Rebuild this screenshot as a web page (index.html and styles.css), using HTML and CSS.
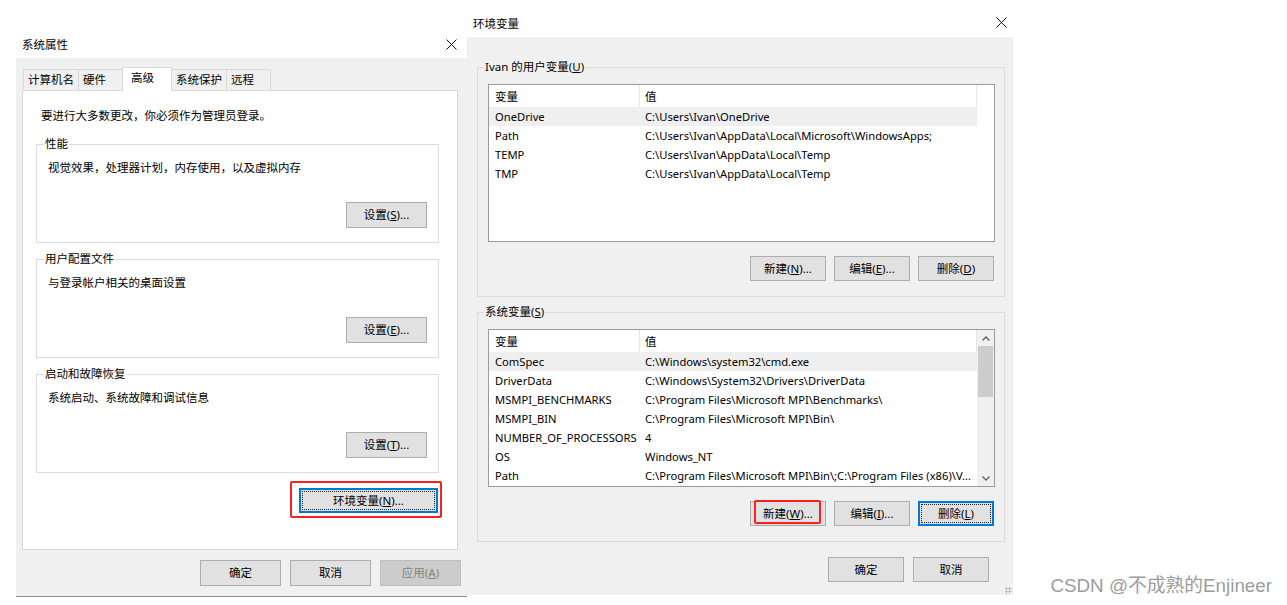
FILE: index.html
```html
<!DOCTYPE html>
<html lang="zh-CN">
<head>
    <meta charset="UTF-8">
    <meta name="viewport" content="width=device-width, initial-scale=1.0">
    <title>系统属性 - 环境变量</title>
    <link rel="stylesheet" href="styles.css">
</head>
<body>
<div class="desktop">

    <!-- 系统属性 -->
    <div class="window sysprop">
        <div class="titlebar">
            <span class="title">系统属性</span>
            <svg class="close" width="11" height="11" viewBox="0 0 11 11"><path d="M0.5 0.5L10.5 10.5M10.5 0.5L0.5 10.5"/></svg>
        </div>
        <div class="window-body">
            <div class="tabs">
                <div class="tab">计算机名</div>
                <div class="tab">硬件</div>
                <div class="tab active">高级</div>
                <div class="tab">系统保护</div>
                <div class="tab">远程</div>
            </div>
            <div class="tab-panel">
                <p class="notice">要进行大多数更改，你必须作为管理员登录。</p>

                <fieldset class="group">
                    <legend>性能</legend>
                    <p>视觉效果，处理器计划，内存使用，以及虚拟内存</p>
                    <div class="group-actions"><button class="btn">设置(<u>S</u>)...</button></div>
                </fieldset>

                <fieldset class="group">
                    <legend>用户配置文件</legend>
                    <p>与登录帐户相关的桌面设置</p>
                    <div class="group-actions"><button class="btn">设置(<u>E</u>)...</button></div>
                </fieldset>

                <fieldset class="group">
                    <legend>启动和故障恢复</legend>
                    <p>系统启动、系统故障和调试信息</p>
                    <div class="group-actions"><button class="btn">设置(<u>T</u>)...</button></div>
                </fieldset>

                <div class="env-row">
                    <div class="mark">
                        <button class="btn btn-env focused">环境变量(<u>N</u>)...</button>
                    </div>
                </div>
            </div>
            <div class="footer">
                <button class="btn">确定</button>
                <button class="btn">取消</button>
                <button class="btn" disabled>应用(<u>A</u>)</button>
            </div>
        </div>
    </div>

    <!-- 环境变量 -->
    <div class="window envvars">
        <div class="titlebar">
            <span class="title">环境变量</span>
            <svg class="close" width="11" height="11" viewBox="0 0 11 11"><path d="M0.5 0.5L10.5 10.5M10.5 0.5L0.5 10.5"/></svg>
        </div>
        <div class="window-body">
            <fieldset class="var-group">
                <legend>Ivan 的用户变量(<u>U</u>)</legend>
                <div class="listview">
                    <div class="list-table">
                        <div class="list-head"><span>变量</span><span>值</span></div>
                        <div class="list-row selected"><span>OneDrive</span><span>C:\Users\Ivan\OneDrive</span></div>
                        <div class="list-row"><span>Path</span><span>C:\Users\Ivan\AppData\Local\Microsoft\WindowsApps;</span></div>
                        <div class="list-row"><span>TEMP</span><span>C:\Users\Ivan\AppData\Local\Temp</span></div>
                        <div class="list-row"><span>TMP</span><span>C:\Users\Ivan\AppData\Local\Temp</span></div>
                    </div>
                </div>
                <div class="var-actions">
                    <button class="btn btn-sm">新建(<u>N</u>)...</button>
                    <button class="btn btn-sm">编辑(<u>E</u>)...</button>
                    <button class="btn btn-sm">删除(<u>D</u>)</button>
                </div>
            </fieldset>

            <fieldset class="var-group">
                <legend>系统变量(<u>S</u>)</legend>
                <div class="listview">
                    <div class="list-table">
                        <div class="list-head"><span>变量</span><span>值</span></div>
                        <div class="list-row selected"><span>ComSpec</span><span>C:\Windows\system32\cmd.exe</span></div>
                        <div class="list-row"><span>DriverData</span><span>C:\Windows\System32\Drivers\DriverData</span></div>
                        <div class="list-row"><span>MSMPI_BENCHMARKS</span><span>C:\Program Files\Microsoft MPI\Benchmarks\</span></div>
                        <div class="list-row"><span>MSMPI_BIN</span><span>C:\Program Files\Microsoft MPI\Bin\</span></div>
                        <div class="list-row"><span>NUMBER_OF_PROCESSORS</span><span>4</span></div>
                        <div class="list-row"><span>OS</span><span>Windows_NT</span></div>
                        <div class="list-row"><span>Path</span><span>C:\Program Files\Microsoft MPI\Bin\;C:\Program Files (x86)\V...</span></div>
                    </div>
                    <div class="scrollbar">
                        <div class="arrow"><svg width="8" height="5" viewBox="0 0 8 5"><path d="M0.5 4.5L4 1L7.5 4.5"/></svg></div>
                        <div class="thumb"></div>
                        <div class="track"></div>
                        <div class="arrow"><svg width="8" height="5" viewBox="0 0 8 5"><path d="M0.5 0.5L4 4L7.5 0.5"/></svg></div>
                    </div>
                </div>
                <div class="var-actions">
                    <button class="btn btn-sm marked">新建(<u>W</u>)...<span class="mark-box"></span></button>
                    <button class="btn btn-sm">编辑(<u>I</u>)...</button>
                    <button class="btn btn-sm focused">删除(<u>L</u>)</button>
                </div>
            </fieldset>

            <div class="footer">
                <button class="btn btn-sm">确定</button>
                <button class="btn btn-sm">取消</button>
            </div>
            <div class="grip"></div>
        </div>
    </div>

    <div class="watermark">CSDN @不成熟的Enjineer</div>
</div>
</body>
</html>
```

FILE: styles.css
```css
body {
    margin: 0;
    background-color: #fff;
    font-family: "Noto Sans", "Noto Sans CJK SC", sans-serif;
    font-size: 11.5px;
    color: #000;
}

.desktop {
    position: relative;
    width: 1287px;
    height: 605px;
    overflow: hidden;
}

/* windows sit on the desktop at their own place */
.window {
    position: absolute;
    display: flex;
    flex-direction: column;
}

.sysprop {
    left: 16px;
    top: 30px;
    width: 451px;
}

.envvars {
    left: 467px;
    top: 8px;
    width: 546px;
}

.titlebar {
    display: flex;
    align-items: center;
    justify-content: space-between;
    background-color: #fff;
    padding: 0 10px 0 6px;
    height: 28px;
}

.envvars .titlebar {
    height: 29px;
    padding-right: 6px;
}

.close {
    fill: none;
    stroke: #111;
    stroke-width: 1;
}

.window-body {
    position: relative;
    background-color: #f0f0f0;
    display: flex;
    flex-direction: column;
    box-sizing: border-box;
}

.sysprop .window-body {
    height: 539px;
    padding: 9px 9px 10px 6px;
    border-bottom: 1px solid #8c8c8c;
}

.envvars .window-body {
    height: 558px;
    padding: 22px 8px 13px 10px;
}

/* tabs */
.tabs {
    display: flex;
    align-items: flex-end;
    height: 24px;
    margin: 0 0 -1px 1px;
    position: relative;
    z-index: 1;
}

.tab {
    height: 21px;
    min-width: 45px;
    box-sizing: border-box;
    padding: 0 4px;
    margin: 0 0 1px -1px;
    border: 1px solid #d9d9d9;
    border-bottom: none;
    background-color: #f0f0f0;
    display: flex;
    align-items: center;
    line-height: 1;
}

.tab:first-child {
    margin-left: 0;
}

.tab.active {
    height: 24px;
    min-width: 50px;
    margin-bottom: 0;
    padding: 0 8px 4px;
    background-color: #fff;
    position: relative;
    z-index: 2;
}

.tab-panel {
    flex: 1;
    background-color: #fff;
    border: 1px solid #d9d9d9;
    padding: 17px 18px 0 13px;
}

.notice {
    margin: 0 0 12px 5px;
    line-height: 16px;
}

.group {
    margin: 0 0 8px;
    padding: 8px 11px 14px;
    border: 1px solid #dcdcdc;
    min-width: 0;
}

.group legend,
.var-group legend {
    padding: 0 1px;
    margin-left: -4px;
    line-height: 16px;
}

.group p {
    margin: 0;
    line-height: 16px;
}

.group-actions {
    display: flex;
    justify-content: flex-end;
    margin-top: 26px;
}

.env-row {
    display: flex;
    justify-content: flex-end;
    margin-right: -3px;
}

.mark {
    border: 2px solid #ff1f1f;
    border-radius: 2px;
    padding: 5px 2px 3px 7px;
}

/* buttons */
.btn {
    position: relative;
    width: 81px;
    height: 26px;
    padding: 0;
    border: 1px solid #adadad;
    background-color: #e1e1e1;
    font: inherit;
    color: #000;
    line-height: 1;
}

.btn:disabled {
    background-color: #cccccc;
    border-color: #bfbfbf;
    color: #838383;
}

.btn-env {
    width: 139px;
    height: 25px;
}

.btn-sm {
    width: 76px;
    height: 25px;
}

.btn.focused {
    border-color: #0078d7;
    box-shadow: inset 0 0 0 1px #0078d7;
}

.btn.focused::after {
    content: '';
    position: absolute;
    top: 2px;
    left: 2px;
    right: 2px;
    bottom: 2px;
    border: 1px dotted #222;
}

.mark-box {
    position: absolute;
    left: 3px;
    top: -2px;
    width: 67px;
    height: 24px;
    box-sizing: border-box;
    border: 2px solid #ff1f1f;
    border-radius: 2px;
}

.footer {
    display: flex;
    justify-content: flex-end;
    gap: 9px;
    margin-top: 10px;
    margin-right: -3px;
}

.envvars .footer {
    margin-top: 15px;
    margin-right: 16px;
}

/* environment variable groups */
.var-group {
    margin: 0;
    padding: 9px 9px 15px 10px;
    border: 1px solid #dcdcdc;
    min-width: 0;
}

.var-group + .var-group {
    margin-top: 7px;
}

.listview {
    height: 158px;
    box-sizing: border-box;
    border: 1px solid #9a9a9a;
    background-color: #fff;
    display: flex;
    overflow: hidden;
    font-size: 11.2px;
}

.list-table {
    width: 488px;
}

.list-head,
.list-row {
    display: grid;
    grid-template-columns: 151px 1fr;
    align-items: center;
    white-space: nowrap;
}

.list-head {
    height: 22px;
    font-size: 11.5px;
}

.list-head span {
    height: 100%;
    display: flex;
    align-items: center;
    border-right: 1px solid #e5e5e5;
}

.list-row {
    height: 19px;
    padding-bottom: 1px;
    box-sizing: border-box;
}

.list-head span:first-child,
.list-row span:first-child {
    padding-left: 6px;
}

.list-head span:last-child,
.list-row span:last-child {
    padding-left: 5px;
}

.list-row.selected {
    background-color: #efefef;
}

.scrollbar {
    width: 17px;
    background-color: #f0f0f0;
    display: flex;
    flex-direction: column;
    align-items: center;
}

.arrow {
    height: 16px;
    display: flex;
    align-items: center;
    justify-content: center;
}

.arrow svg {
    fill: none;
    stroke: #606060;
    stroke-width: 1.3;
}

.thumb {
    width: 15px;
    height: 51px;
    background-color: #cdcdcd;
}

.track {
    flex: 1;
}

.var-actions {
    display: flex;
    justify-content: flex-end;
    gap: 8px;
    margin: 14px 1px 0 0;
}

.grip {
    position: absolute;
    right: 1px;
    bottom: 1px;
    width: 7px;
    height: 7px;
    background: radial-gradient(circle, #b8b8b8 45%, transparent 55%) 0 0 / 3px 3px;
}

.watermark {
    position: absolute;
    right: 15px;
    bottom: 8px;
    font-family: "Liberation Sans", "Noto Sans CJK SC", sans-serif;
    font-size: 18.8px;
    color: #9c9c9c;
    text-shadow: 0 0 1px #fff;
}
```
